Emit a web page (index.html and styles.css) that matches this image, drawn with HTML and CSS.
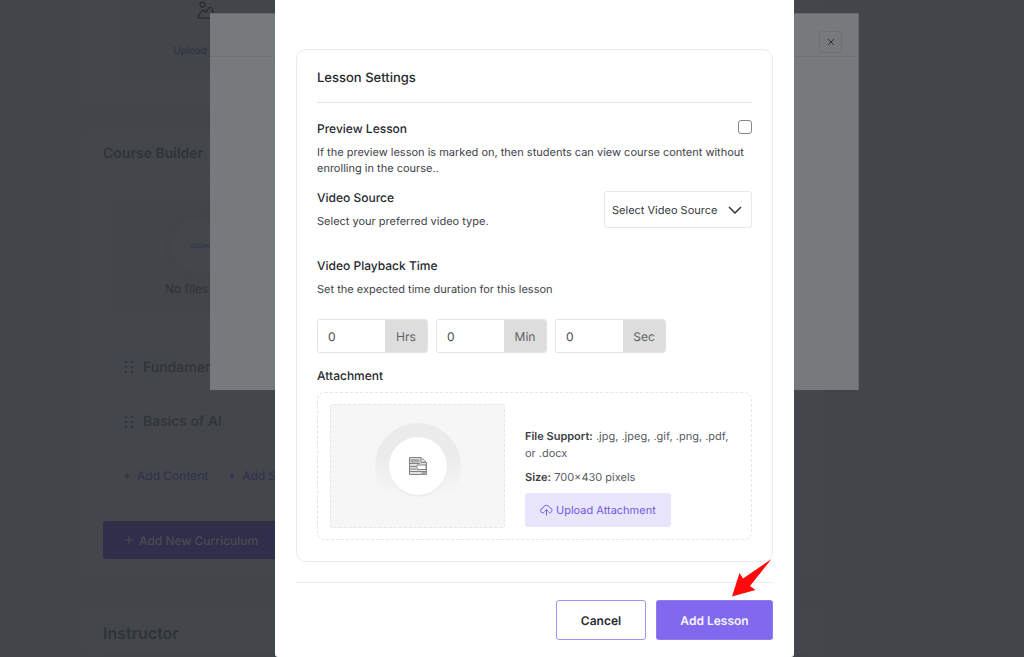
FILE: index.html
```html
<!DOCTYPE html>
<html lang="en">
<head>
<meta charset="utf-8">
<meta name="viewport" content="width=device-width, initial-scale=1">
<title>Course Builder</title>
<link rel="stylesheet" href="styles.css">
</head>
<body>
<main class="page">
  <section class="panel panel-media">
    <div class="drop drop-media">
      <svg class="media-icon" viewBox="0 0 20 20" aria-hidden="true"><circle cx="6" cy="3.500" r="2.700"/><path d="M2 18.500h14.500c2 0 2.500-1.500 2-3L16.500 8c-.8-2-3-2-4 0l-2 3.500c-.5.8-1.300.5-1.500-.3-.5-2-3.500-2-4.500.3L2 15c-.7 1.500-.7 3 0 3.500z"/></svg>
      <p class="drop-text">Upload Image</p>
    </div>
  </section>
  <section class="panel panel-builder">
    <h2 class="panel-title">Course Builder</h2>
    <div class="drop-frame">
      <div class="drop drop-scorm">
        <div class="scorm-disc">SCORM</div>
        <p class="drop-label">No files here</p>
      </div>
    </div>
    <div class="topic"><svg class="grip" viewBox="0 0 8 12" aria-hidden="true"><path d="M0 1h2M6 1h2M0 6h2M6 6h2M0 11h2M6 11h2"/></svg>Fundamentals</div>
    <div class="topic-open">
      <div class="topic topic-inner"><svg class="grip" viewBox="0 0 8 12" aria-hidden="true"><path d="M0 1h2M6 1h2M0 6h2M6 6h2M0 11h2M6 11h2"/></svg>Basics of AI</div>
      <div class="topic-actions">
        <button class="text-button" type="button"><svg class="plus" viewBox="0 0 8 8" aria-hidden="true"><path d="M4 1v6M1 4h6"/></svg>Add Content</button>
        <button class="text-button" type="button"><svg class="plus" viewBox="0 0 8 8" aria-hidden="true"><path d="M4 1v6M1 4h6"/></svg>Add SCORM</button>
      </div>
    </div>
    <button class="curriculum-button" type="button"><svg class="plus" viewBox="0 0 8 8" aria-hidden="true"><path d="M4 0v8M0 4h8"/></svg>Add New Curriculum</button>
  </section>
  <section class="panel panel-instructor">
    <h2 class="panel-title panel-title-large">Instructor</h2>
  </section>
</main>

<div class="layer layer-back">
  <div class="back-dialog">
    <header class="back-header">
      <button class="close-button" type="button" aria-label="Close"><svg class="close-icon" viewBox="0 0 8 8" aria-hidden="true"><path d="M1 1l6 6M7 1L1 7"/></svg></button>
    </header>
  </div>
</div>

<div class="layer layer-front">
  <form class="modal" role="dialog" aria-labelledby="settings-title">
    <div class="card">
      <h2 class="card-title" id="settings-title">Lesson Settings</h2>
      <div class="preview-setting">
        <div class="row row-preview">
          <label class="label" for="preview">Preview Lesson</label>
          <input class="check" id="preview" type="checkbox">
        </div>
        <p class="hint">If the preview lesson is marked on, then students can view course content without enrolling in the course..</p>
      </div>
      <div class="row row-source">
        <div class="row-text">
          <label class="label" for="source">Video Source</label>
          <p class="hint">Select your preferred video type.</p>
        </div>
        <div class="select-box">
          <select class="select" id="source"><option>Select Video Source</option></select>
          <svg class="chevron" viewBox="0 0 14 8" aria-hidden="true"><path d="M1 1l6 6 6-6"/></svg>
        </div>
      </div>
      <div class="playback">
        <h3 class="label">Video Playback Time</h3>
        <p class="hint">Set the expected time duration for this lesson</p>
        <div class="times">
          <div class="time"><input class="time-input" id="hrs" type="text" value="0"><label class="unit" for="hrs">Hrs</label></div>
          <div class="time"><input class="time-input" id="min" type="text" value="0"><label class="unit" for="min">Min</label></div>
          <div class="time"><input class="time-input" id="sec" type="text" value="0"><label class="unit" for="sec">Sec</label></div>
        </div>
      </div>
      <h3 class="label label-attachment">Attachment</h3>
      <div class="attachment">
        <div class="preview">
          <div class="ring"><div class="disc">
            <svg class="file-icon" viewBox="0 0 18 18" aria-hidden="true">
              <path class="file-sheet" d="M.5.500h11.500l5.500 5v12H.5z"/>
              <path class="file-block" d="M1.500 2h9v3.500h-9zM12.500 14.500h5v3h-5z"/>
              <path class="file-lines" d="M1 6.500h10M1 9.500h6M1 12h6M1 14.500h16M12 1v4.500h5"/>
              <path class="file-window" d="M8 8h9v4.500H8z"/>
            </svg>
          </div></div>
        </div>
        <div class="details">
          <p class="detail"><strong>File Support:</strong> .jpg, .jpeg, .gif, .png, .pdf, or .docx</p>
          <p class="detail"><strong>Size:</strong> 700×430 pixels</p>
          <button class="upload" type="button"><svg class="cloud" viewBox="0 0 14 14" aria-hidden="true"><path d="M4.500 9.500H3.200a2.500 2.500 0 0 1-.2-5A4 4 0 0 1 10.600 4a2.800 2.800 0 0 1 .2 5.500H9.500M7 12.500V6M4.800 8.200L7 6l2.200 2.200"/></svg>Upload Attachment</button>
        </div>
      </div>
    </div>
    <footer class="footer">
      <button class="button button-outline" type="button">Cancel</button>
      <button class="button button-primary" type="button">Add Lesson</button>
      <svg class="pointer" viewBox="0 0 40 38" aria-hidden="true"><path d="M39.500 0L11 19.500 7.500 14 0 37.500 23.500 31 18 27z"/></svg>
    </footer>
  </form>
</div>
</body>
</html>
```
FILE: styles.css
```css
* { box-sizing: border-box; }

body {
  margin: 0;
  height: 100vh;
  overflow: hidden;
  background: #424549;
  color: #2f3339;
  font-family: Inter, "Liberation Sans", sans-serif;
  text-rendering: geometricPrecision;
}

h2, h3, p { margin: 0; font-weight: inherit; }
button, input, select { font-family: inherit; text-rendering: inherit; }

/* Dimmed course page */
.page { padding: 0 199px 0 83px; }
.panel { background: #43474b; padding: 0 20px; }
.panel-media { height: 107px; padding: 0 36px; margin-bottom: 23px; }
.drop { display: flex; flex-direction: column; align-items: center; background: #424549; }
.drop-media { width: 174px; height: 76px; padding-top: 1px; }
.media-icon { width: 18px; height: 19px; fill: none; stroke: #292c34; stroke-width: 1.5; }
.drop-text { margin-top: 23px; font-size: 10px; line-height: 16px; color: #2e3148; white-space: nowrap; }

.panel-builder { padding-bottom: 20px; margin-bottom: 25px; }
.panel-title { padding: 14px 0 10px; font-size: 14px; line-height: 20px; font-weight: 600; border-bottom: 1px solid #404347; }
.panel-title-large { padding-top: 19px; font-size: 16px; }
.drop-frame { margin-top: 13px; padding: 8px 10px; border: 1px solid #414448; }
.drop-scorm { width: 174px; height: 114px; padding-top: 21px; }
.scorm-disc {
  display: grid; place-items: center; width: 56px; height: 56px;
  border-radius: 50%; background: #43474b; box-shadow: 0 0 0 8px #414448;
  font-size: 6px; color: #2e3148;
}
.drop-label { margin-top: 5px; font-size: 12px; line-height: 20px; white-space: nowrap; }
.topic {
  display: flex; align-items: center; gap: 10px; height: 44px; margin-top: 25px;
  padding: 0 21px; border: 1px solid #414448; font-size: 14px; font-weight: 500;
}
.grip { width: 8px; height: 12px; fill: none; stroke: #2f3445; stroke-width: 2; }
.topic-open { margin-top: 10px; border: 1px solid #414448; }
.topic-inner { margin: 0; border-width: 0 0 1px; }
.topic-actions { display: flex; gap: 20px; padding: 22px 19px; }
.text-button {
  display: flex; align-items: center; gap: 6px; padding: 0; border: 0;
  background: none; font-size: 12px; line-height: 20px; color: #302f50;
}
.plus { width: 8px; height: 8px; fill: none; stroke: currentColor; }
.curriculum-button {
  display: flex; align-items: center; gap: 6px; height: 38px; margin-top: 12px;
  padding: 0 22px; border: 0; border-radius: 3px; background: #302f4b;
  color: #484b50; font-size: 12px; font-weight: 500;
}

/* Dialog layers */
.layer { position: fixed; inset: 0 0 0 45px; display: flex; justify-content: center; align-items: flex-start; }
.back-dialog { width: 649px; height: 377px; margin-top: 13px; background: #767a7d; border: solid #666a6e; border-width: 1px 1px 0 0; }
.back-header { display: flex; justify-content: flex-end; padding: 17px 16px 3px; border-bottom: 1px dotted #66696c; }
.close-button {
  display: grid; place-items: center; width: 23px; height: 22px; padding: 0;
  border: 1px dotted #66696c; border-radius: 3px; background: none;
}
.close-icon { width: 8px; height: 8px; fill: none; stroke: #303338; stroke-width: 1; }

.modal { width: 519px; padding: 49px 21px 17px; background: #fff; border-radius: 0 0 3px 3px; color: #262a30; }
.card { padding: 18px 20px 21px; border: 1px solid #ebebed; border-radius: 10px; }
.card-title { padding-bottom: 14px; border-bottom: 1px solid #e6e6e8; font-size: 13px; line-height: 20px; font-weight: 500; }
.row { display: flex; justify-content: space-between; align-items: flex-start; }
.preview-setting { margin-top: 16px; }
.row-source { margin-top: 12px; }
.label { display: block; font-size: 12px; line-height: 20px; font-weight: 500; }
.hint { margin-top: 5px; font-size: 11px; line-height: 16px; color: #3e4248; }
.check { appearance: none; width: 14px; height: 14px; margin: 1px 0 0; border: 1px solid #85878a; border-radius: 3px; background: #fff; }

.select-box { display: grid; align-items: center; width: 148px; margin-top: 3px; }
.select {
  grid-area: 1 / 1; appearance: none; width: 100%; height: 37px; padding: 0 7px;
  border: 1px solid #e8e8ea; border-radius: 3px; background: #fff; color: #33373d; font-size: 11px;
}
.chevron { grid-area: 1 / 1; justify-self: end; width: 14px; height: 8px; margin-right: 10px; fill: none; stroke: #33373d; stroke-width: 1.5; pointer-events: none; }

.playback { margin-top: 27px; }
.times { display: flex; gap: 8px; margin-top: 22px; }
.time { display: flex; width: 111px; height: 34px; border: 1px solid #e2e2e4; border-radius: 3px; overflow: hidden; }
.time-input { flex: 1; min-width: 0; padding: 0 10px; border: 0; background: #fff; color: #4a4d53; font-size: 12px; }
.unit { display: grid; place-items: center; width: 42px; background: #dddddd; color: #606369; font-size: 12px; }

.label-attachment { margin-top: 13px; }
.attachment { display: flex; gap: 20px; margin-top: 6px; padding: 11px 12px; border: 1px dashed #e6e6e8; border-radius: 8px; }
.preview { display: grid; place-items: center; flex: none; width: 175px; height: 124px; border: 1px dashed #e6e6e8; border-radius: 3px; background: #f6f6f6; }
.ring { display: grid; place-items: center; width: 86px; height: 86px; border-radius: 50%; background: linear-gradient(#ebebeb 35%, #f6f6f6 85%); }
.disc { display: grid; place-items: center; width: 58px; height: 58px; border-radius: 50%; background: #fff; box-shadow: 0 1px 2px #e6e6e6; }
.file-icon { width: 18px; height: 18px; fill: none; stroke: #828386; }
.file-sheet { fill: #e2e2e3; }
.file-block { fill: #a7a8aa; stroke: none; }
.file-window { fill: #fff; }
.details { padding-top: 24px; }
.detail { margin-bottom: 7px; font-size: 11px; line-height: 17px; color: #585b61; }
.detail strong { font-weight: 600; color: #3d4046; }
.upload {
  display: flex; align-items: center; gap: 3px; width: 146px; height: 34px; padding: 0 15px;
  border: 0; border-radius: 3px; background: #e9e6fb; color: #7257e6; font-size: 11px;
}
.cloud { width: 13px; height: 13px; fill: none; stroke: currentColor; }

.footer { position: relative; display: flex; justify-content: flex-end; gap: 10px; margin-top: 20px; padding-top: 17px; border-top: 1px solid #ececee; }
.button { height: 40px; border-radius: 3px; font-size: 12px; font-weight: 600; }
.button-outline { width: 90px; border: 1px solid #a194f2; background: #fff; color: #262a30; }
.button-primary { width: 117px; border: 1px dotted #9b8cf5; background: #8069ef; background-clip: border-box; color: #f6f4ff; }
.pointer { position: absolute; right: 1px; top: -24px; width: 40px; height: 38px; fill: #ff0a0a; }
```
